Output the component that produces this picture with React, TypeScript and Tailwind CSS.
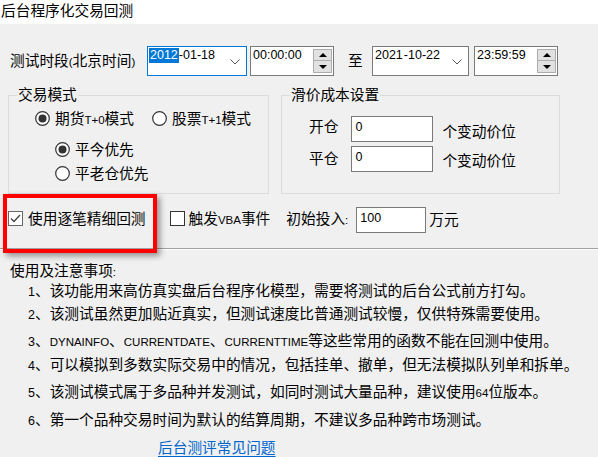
import type { ReactNode } from 'react'

function L({ children }: { children: ReactNode }) {
  return <span className="font-['Liberation_Sans',sans-serif] text-[11.5px]">{children}</span>
}

function Chevron() {
  return (
    <svg width="10" height="6" viewBox="0 0 10 6" className="shrink-0">
      <path d="M0.5 0.5 L5 5 L9.5 0.5" fill="none" stroke="#555" strokeWidth="1" />
    </svg>
  )
}

function DateBox({ value, focused, className }: { value: string; focused?: boolean; className: string }) {
  const year = value.slice(0, 4)
  const rest = value.slice(4)
  return (
    <div
      className={`h-[30px] bg-white border flex items-start pt-[1px] pl-[1px] pr-[6px] font-['Liberation_Sans',sans-serif] text-[12.5px] leading-[15px] ${
        focused ? 'border-[#0078d7]' : 'border-[#7a7a7a]'
      } ${className}`}
    >
      <span className={`px-[1px] ${focused ? 'bg-[#0078d7] text-white' : ''}`}>{year}</span>
      <span>{rest}</span>
      <div className="ml-auto self-center">
        <Chevron />
      </div>
    </div>
  )
}

function Spinner() {
  return (
    <div className="ml-auto mt-[2px] w-[19px] h-[24px] flex flex-col">
      <div className="h-[12px] bg-[#e1e1e1] border border-[#adadad] flex items-center justify-center">
        <svg width="8" height="4" viewBox="0 0 8 4">
          <path d="M0 4 L4 0 L8 4 Z" fill="#000" />
        </svg>
      </div>
      <div className="h-[12px] bg-[#e1e1e1] border border-[#adadad] border-t-0 flex items-center justify-center">
        <svg width="8" height="4" viewBox="0 0 8 4">
          <path d="M0 0 L8 0 L4 4 Z" fill="#000" />
        </svg>
      </div>
    </div>
  )
}

function TimeBox({ value, className }: { value: string; className: string }) {
  return (
    <div
      className={`w-[84px] h-[30px] bg-white border border-[#7a7a7a] flex items-start pl-[1px] pr-[1px] font-['Liberation_Sans',sans-serif] text-[12.5px] leading-[15px] ${className}`}
    >
      <span className="pt-[1px] pl-[1px]">{value}</span>
      <Spinner />
    </div>
  )
}

function Radio({ checked }: { checked?: boolean }) {
  return (
    <svg width="15" height="15" viewBox="0 0 15 15" className="shrink-0">
      <circle cx="7.5" cy="7.5" r="6.8" fill="#fff" stroke="#333" strokeWidth="1.2" />
      {checked && <circle cx="7.5" cy="7.5" r="4" fill="#333" />}
    </svg>
  )
}

function Check({ checked }: { checked?: boolean }) {
  return (
    <div
      className={`w-[15px] h-[15px] shrink-0 bg-white border flex items-center justify-center ${
        checked ? 'border-[#666]' : 'border-[#333]'
      }`}
    >
      {checked && (
        <svg width="11" height="9" viewBox="0 0 11 9">
          <path d="M1 4.5 L4 7.5 L10 1" fill="none" stroke="#444" strokeWidth="1.3" />
        </svg>
      )}
    </div>
  )
}

function Group({ title, className, children }: { title: string; className: string; children: ReactNode }) {
  return (
    <div className={`relative h-[99px] border border-[#dcdcdc] ${className}`}>
      <span className="absolute left-[8px] top-[-12px] px-[1px] bg-[#f0f0f0] leading-[20px]">{title}</span>
      {children}
    </div>
  )
}

function NumInput({ value, className }: { value: string; className: string }) {
  return (
    <div
      className={`h-[26px] bg-white border border-[#7a7a7a] pl-[3px] pt-[3px] font-['Liberation_Sans',sans-serif] text-[12.5px] leading-[15px] ${className}`}
    >
      {value}
    </div>
  )
}

const notes = [
  { top: 'mt-[0px]', n: '1', text: <>、该功能用来高仿真实盘后台程序化模型，需要将测试的后台公式前方打勾。</> },
  { top: 'mt-[3px]', n: '2', text: <>、该测试虽然更加贴近真实，但测试速度比普通测试较慢，仅供特殊需要使用。</> },
  {
    top: 'mt-[7px]',
    n: '3',
    text: (
      <>
        、<L>DYNAINFO</L>、<L>CURRENTDATE</L>、<L>CURRENTTIME</L>等这些常用的函数不能在回测中使用。
      </>
    ),
  },
  { top: 'mt-[4px]', n: '4', text: <>、可以模拟到多数实际交易中的情况，包括挂单、撤单，但无法模拟队列单和拆单。</> },
  {
    top: 'mt-[7px]',
    n: '5',
    text: (
      <>
        、该测试模式属于多品种并发测试，如同时测试大量品种，建议使用<L>64</L>位版本。
      </>
    ),
  },
  { top: 'mt-[8px]', n: '6', text: <>、第一个品种交易时间为默认的结算周期，不建议多品种跨市场测试。</> },
]

export default function App() {
  return (
    <div className="relative w-[598px] h-[457px] overflow-hidden bg-[#f0f0f0] text-black text-[14.7px] font-['Noto_Sans_CJK_SC',sans-serif]">
      <div className="h-[24px] bg-white leading-[20px] pl-[1px]">后台程序化交易回测</div>

      {/* 测试时段 */}
      <div className="mt-[22px] flex items-center h-[30px]">
        <span className="ml-[10px] w-[137px] h-[20px] leading-[20px] mt-[-3px]">
          测试时段<L>(</L>北京时间<L>)</L>
        </span>
        <DateBox value="2012-01-18" focused className="w-[100px]" />
        <TimeBox value="00:00:00" className="ml-[3px]" />
        <span className="ml-[14px] w-[14px] leading-[20px] mt-[-3px]">至</span>
        <DateBox value="2021-10-22" className="ml-[10px] w-[97px]" />
        <TimeBox value="23:59:59" className="ml-[5px]" />
      </div>

      {/* 分组 */}
      <div className="mt-[19px] flex">
        <Group title="交易模式" className="ml-[8px] w-[261px]">
          <div className="flex flex-col pt-[12px]">
            <div className="flex items-center h-[20px] ml-[26px]">
              <Radio checked />
              <span className="ml-[5px] w-[97px] h-[20px] leading-[20px]">
                期货<L>T+0</L>模式
              </span>
              <Radio />
              <span className="ml-[5px] h-[20px] leading-[20px]">
                股票<L>T+1</L>模式
              </span>
            </div>
            <div className="flex items-center h-[20px] ml-[46px] mt-[11px]">
              <Radio checked />
              <span className="ml-[5px]">平今优先</span>
            </div>
            <div className="flex items-center h-[20px] ml-[46px] mt-[4px]">
              <Radio />
              <span className="ml-[5px]">平老仓优先</span>
            </div>
          </div>
        </Group>

        <Group title="滑价成本设置" className="ml-[12px] w-[279px]">
          <div className="flex flex-col pt-[20px] pl-[27px]">
            <div className="flex items-center h-[26px]">
              <span className="leading-[20px] mb-[6px]">开仓</span>
              <NumInput value="0" className="ml-[13px] w-[82px]" />
              <span className="ml-[9px] leading-[20px] mt-[3px]">个变动价位</span>
            </div>
            <div className="flex items-center h-[26px] mt-[4px]">
              <span className="leading-[20px] mb-[2px]">平仓</span>
              <NumInput value="0" className="ml-[13px] w-[82px]" />
              <span className="ml-[9px] leading-[20px] mt-[2px]">个变动价位</span>
            </div>
          </div>
        </Group>
      </div>

      {/* 选项行 */}
      <div className="mt-[13px] flex items-center h-[26px]">
        <div className="ml-[8px] flex items-center mb-[4px]">
          <Check checked />
          <span className="ml-[5px] leading-[20px]">使用逐笔精细回测</span>
        </div>
        <div className="ml-[24px] flex items-center mb-[4px]">
          <Check />
          <span className="ml-[4px] h-[20px] leading-[20px]">
            触发<L>VBA</L>事件
          </span>
        </div>
        <span className="ml-[16px] h-[20px] leading-[20px] mb-[4px]">
          初始投入<L>:</L>
        </span>
        <NumInput value="100" className="ml-[8px] w-[70px]" />
        <span className="ml-[3px] leading-[20px] mb-[2px]">万元</span>
      </div>

      <div className="mt-[15px] h-[1px] bg-[#a0a0a0]" />
      <div className="h-[1px] bg-white" />

      {/* 注意事项 */}
      <div className="mt-[10px] pl-[10px] h-[20px] leading-[20px]">
        使用及注意事项<L>:</L>
      </div>
      {notes.map((item) => (
        <div key={item.n} className={`pl-[28px] h-[20px] leading-[20px] whitespace-nowrap ${item.top}`}>
          <span className="font-['Liberation_Sans',sans-serif] text-[12.5px]">{item.n}</span>
          {item.text}
        </div>
      ))}
      <div className="mt-[8px] pl-[158px] h-[20px] leading-[20px]">
        <span className="text-[#0066cc] underline underline-offset-[3px]">后台测评常见问题</span>
      </div>

      {/* 标注框 */}
      <div className="absolute left-[3px] top-[194px] w-[154px] h-[59px] border-[4px] border-[#ff0000] shadow-[3px_3px_6px_rgba(0,0,0,0.4)]" />
    </div>
  )
}
